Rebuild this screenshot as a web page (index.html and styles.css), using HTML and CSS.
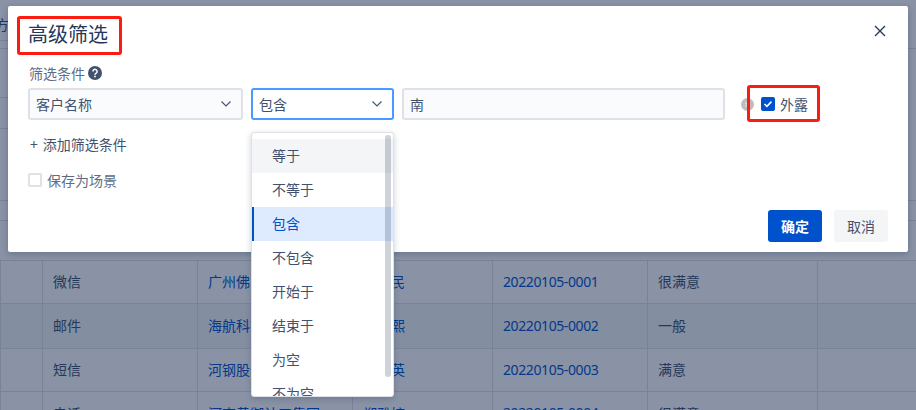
FILE: index.html
```html
<!DOCTYPE html>
<html lang="zh">
<head>
<meta charset="utf-8">
<title>高级筛选</title>
<link rel="stylesheet" href="styles.css">
</head>
<body>
<div class="page">
  <div class="top-edge">
    <div class="edge edge-left">
      <div class="edge-row e41"><span class="edge-char">方</span></div>
      <div class="edge-row e8"></div>
      <div class="edge-row e49"></div>
      <div class="edge-row e31"></div>
      <div class="edge-row e72"></div>
      <div class="edge-row e20"></div>
    </div>
    <div class="edge edge-right">
      <div class="edge-row e49b"></div>
      <div class="edge-row e152"></div>
      <div class="edge-row e20"></div>
    </div>
  </div>
  <table class="grid">
    <colgroup><col class="c0"><col class="c1"><col class="c2"><col class="c3"><col class="c4"><col class="c5"><col class="c6"></colgroup>
    <tr><td></td><td>微信</td><td class="link">广州佛山分公司</td><td class="link">李建民</td><td class="link num">20220105-0001</td><td>很满意</td><td></td></tr>
    <tr class="shade"><td></td><td>邮件</td><td class="link">海航科技集团</td><td class="link">张明熙</td><td class="link num">20220105-0002</td><td>一般</td><td></td></tr>
    <tr><td></td><td>短信</td><td class="link">河钢股份公司</td><td class="link">王秀英</td><td class="link num">20220105-0003</td><td>满意</td><td></td></tr>
    <tr><td></td><td>电话</td><td class="link">河南黄御计工集团</td><td class="link">郑雅婷</td><td class="link num">20220105-0004</td><td>很满意</td><td></td></tr>
  </table>
</div>
<div class="overlay"></div>
<section class="modal">
  <header class="modal-head">
    <h1 class="title">高级筛选</h1>
    <button class="close" aria-label="关闭"><svg width="12" height="12" viewBox="0 0 12 12"><path d="M1 1l10 10M11 1L1 11" stroke="#253858" stroke-width="1.4" fill="none"/></svg></button>
  </header>
  <div class="label-row">筛选条件
    <svg class="help" width="14" height="14" viewBox="0 0 14 14"><circle cx="7" cy="7" r="7" fill="#42526e"/><path d="M4.9 5.5a2.1 2.1 0 1 1 3.3 1.7c-.8.5-1.2.9-1.2 1.6" stroke="#fff" stroke-width="1.5" fill="none"/><rect x="6.2" y="9.7" width="1.6" height="1.6" fill="#fff"/></svg>
  </div>
  <div class="cond-row">
    <div class="field select-a">客户名称<svg class="chev" width="10" height="6" viewBox="0 0 10 6"><path d="M.5.5L5 5l4.5-4.5" stroke="#42526e" stroke-width="1.1" fill="none"/></svg></div>
    <div class="field select-b">包含<svg class="chev" width="10" height="6" viewBox="0 0 10 6"><path d="M.5.5L5 5l4.5-4.5" stroke="#42526e" stroke-width="1.1" fill="none"/></svg></div>
    <div class="field value">南</div>
    <svg class="clear" width="13" height="13" viewBox="0 0 13 13"><circle cx="6.5" cy="6.5" r="6.5" fill="#bdbdbd"/><path d="M4.5 4.5l4 4M8.5 4.5l-4 4" stroke="#e4e4e4" stroke-width="1.2"/></svg>
    <label class="expose">
      <span class="check on"><svg width="10" height="8" viewBox="0 0 10 8"><path d="M1.5 4l2.4 2.3L8.5 1.6" stroke="#fff" stroke-width="1.6" fill="none"/></svg></span>外露
    </label>
  </div>
  <div class="add"><span>+</span><span>添加筛选条件</span></div>
  <label class="save"><span class="check"></span>保存为场景</label>
  <footer class="actions">
    <button class="btn primary">确定</button>
    <button class="btn">取消</button>
  </footer>
  <div class="title-mark"></div>
</section>
<ul class="menu">
  <li class="hover">等于</li>
  <li>不等于</li>
  <li class="selected">包含</li>
  <li>不包含</li>
  <li>开始于</li>
  <li>结束于</li>
  <li>为空</li>
  <li>不为空</li>
  <li class="thumb" aria-hidden="true"></li>
</ul>
</body>
</html>
```
FILE: styles.css
```css
* { box-sizing: border-box; }
html, body { margin: 0; height: 100%; overflow: hidden; }
body {
  width: 916px; height: 410px; position: relative; background: #fff;
  font-family: "Noto Sans CJK SC", "Noto Sans", sans-serif;
  font-size: 14px; color: #42526e;
}
.page { height: 410px; display: flex; flex-direction: column; overflow: hidden; }
.top-edge { height: 260px; flex: none; display: flex; justify-content: space-between; }
.edge { width: 8px; overflow: hidden; display: flex; flex-direction: column; }
.edge-row { flex: none; border-bottom: 1px solid #dfe1e6; }
.e41 { height: 41px; } .e8 { height: 8px; } .e49 { height: 49px; } .e31 { height: 31px; }
.e72 { height: 72px; } .e20 { height: 20px; } .e49b { height: 49px; } .e152 { height: 152px; }
.edge-char { display: block; padding-top: 14px; margin-left: -5px; white-space: nowrap; }
.grid { border-collapse: collapse; table-layout: fixed; width: 916px; flex: none; }
.grid col.c0 { width: 42px; } .grid col.c1 { width: 155px; } .grid col.c2 { width: 155px; }
.grid col.c3 { width: 140px; } .grid col.c4 { width: 155px; } .grid col.c5 { width: 170px; } .grid col.c6 { width: 99px; }
.grid tr { height: 43px; }
.grid tr.shade { height: 45px; }
.grid tr:last-child { height: 44px; }
.grid td { padding: 0 11px 2px 10px; border: 1px solid #dfe1e6; white-space: nowrap; overflow: hidden; }
.grid tr.shade td { background: #f4f5f7; }
.grid td.link { color: #0052cc; }
.grid td.num { font-family: "Noto Sans", sans-serif; letter-spacing: -.4px; }
.overlay { position: absolute; inset: 0; background: rgba(9, 30, 66, .48); }
.modal {
  position: absolute; left: 8px; top: 6px; width: 900px; height: 246px;
  background: #fff; border-radius: 2px; padding: 0 20px;
  box-shadow: 0 2px 6px rgba(9,30,66,.25);
  display: flex; flex-direction: column;
}
.modal-head { height: 50px; display: flex; align-items: center; justify-content: space-between; flex: none; }
.title { margin: 5px 0 0; font-size: 20px; font-weight: 400; color: #253858; line-height: 28px; }
.title-mark {
  position: absolute; left: 9px; top: 10px; width: 105px; height: 39px;
  border: 3px solid #fb1b10; border-radius: 3px;
}
.close { border: 0; background: none; padding: 0; margin-right: 2px; display: flex; }
.label-row { height: 18px; display: flex; align-items: center; gap: 3px; color: #5e6c84; flex: none; margin: 8px 0 0 1px; }
.cond-row { display: flex; align-items: center; margin-top: 6px; height: 32px; flex: none; position: relative; }
.field {
  height: 32px; border: 2px solid #dfe1e6; border-radius: 3px; background: #fafbfc;
  display: flex; align-items: center; justify-content: space-between; padding: 0 10px 0 6px;
}
.select-a { width: 215px; }
.select-b { width: 143px; margin-left: 8px; background: #fff; border-color: #4c9aff; }
.value { width: 323px; margin-left: 8px; }
.clear { margin-left: 16px; flex: none; }
.expose {
  display: flex; align-items: center; gap: 5px; padding-left: 11px;
  position: absolute; left: 719px; top: -3px; width: 73px; height: 37px;
  border: 3px solid #fb1b10; border-radius: 3px;
}
.check { width: 14px; height: 14px; border: 2px solid #dfe1e6; border-radius: 2px; background: #fff; display: flex; align-items: center; justify-content: center; flex: none; }
.check.on { background: #0052cc; border-color: #0052cc; }
.add { margin: 14px 0 0 2px; line-height: 20px; flex: none; display: flex; gap: 5px; }
.save { display: flex; align-items: center; gap: 5px; margin-top: 16px; line-height: 20px; color: #5e6c84; flex: none; }
.actions { margin-top: auto; margin-bottom: 10px; display: flex; justify-content: flex-end; gap: 12px; }
.btn { width: 54px; height: 32px; border: 0; border-radius: 3px; background: #f4f5f7; color: #42526e; font: inherit; padding: 0; }
.btn.primary { background: #0052cc; color: #fff; font-weight: 700; }
.menu {
  position: absolute; left: 251px; top: 132px; width: 143px; height: 265px; margin: 0; padding: 6px 0 0;
  list-style: none; background: #fff; border: 1px solid #dfe1e6; border-radius: 3px; overflow: hidden;
  box-shadow: 0 2px 6px rgba(9,30,66,.2);
}
.menu li { height: 34px; line-height: 33px; padding-left: 20px; }
.menu li.hover { background: #f4f5f7; }
.menu li.selected { background: #deebff; color: #0052cc; border-left: 2px solid #0052cc; padding-left: 18px; }
.menu li.thumb { position: absolute; right: 2px; top: 2px; width: 6px; height: 242px; padding: 0; background: rgba(9,30,66,.2); border-radius: 3px; }
```
